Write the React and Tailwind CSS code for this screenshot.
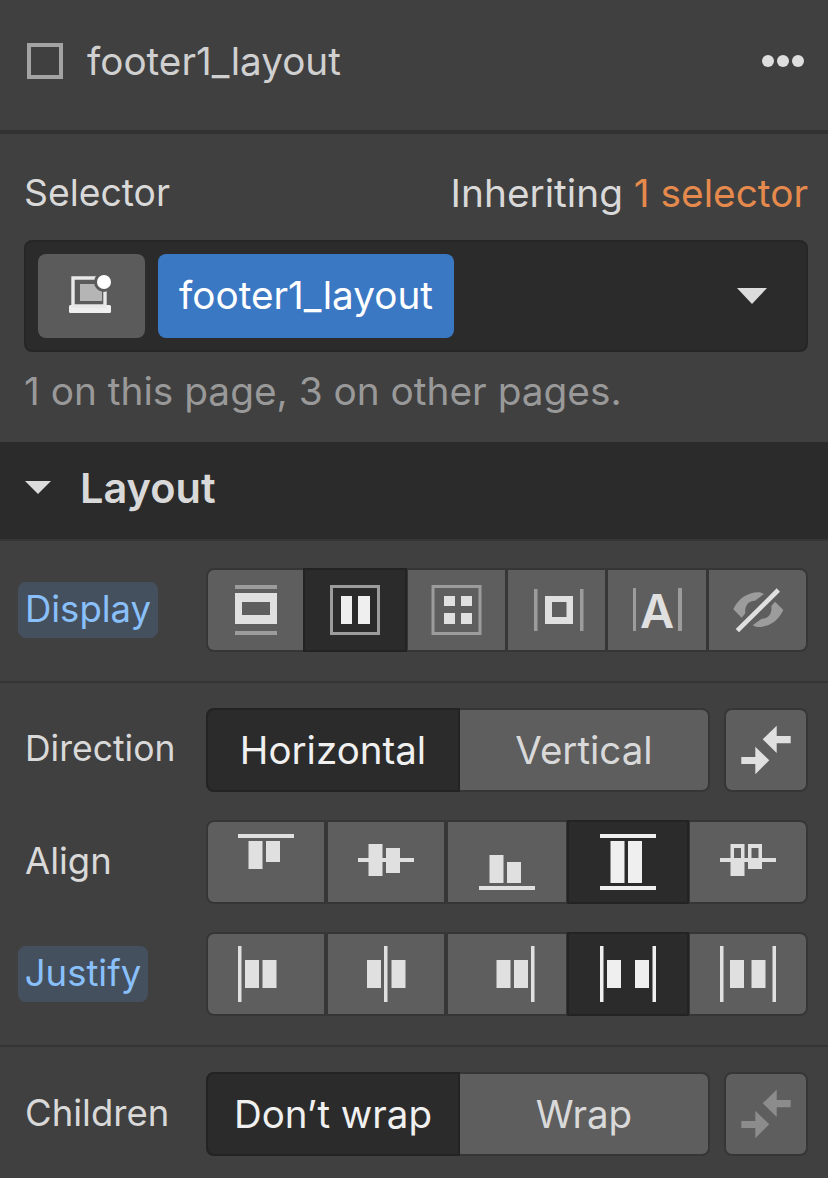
const L = "#e0e0e0";
const G = "#9c9c9c";
const W = "#efefef";

function Ic({ size = 56, children, className = "" }) {
  return (
    <svg width={size} height={size} viewBox={`0 0 ${size} ${size}`} className={className} shapeRendering="geometricPrecision">
      {children}
    </svg>
  );
}
const R = ({ x, y, w, h, f = L }) => <rect x={x} y={y} width={w} height={h} fill={f} />;

const displayIcons = [
  <Ic><R x={7} y={3} w={42} h={4} f={G} /><path fillRule="evenodd" d="M7 11h42v31H7zM14 20v13h28V20z" fill={L} /><R x={7} y={49} w={42} h={4} f={G} /></Ic>,
  <Ic><rect x={4.5} y={4.5} width={47} height={47} fill="none" stroke={G} strokeWidth="3" /><R x={14} y={14} w={11} h={28} f={W} /><R x={31} y={14} w={12} h={28} f={W} /></Ic>,
  <Ic><rect x={4} y={4.5} width={47} height={47} fill="none" stroke={G} strokeWidth="3" /><R x={15} y={14} w={11} h={10} /><R x={32} y={14} w={11} h={10} /><R x={15} y={31} w={11} h={11} /><R x={32} y={31} w={11} h={11} /></Ic>,
  <Ic><R x={5} y={7} w={3.5} h={42} f={G} /><R x={51} y={7} w={3.5} h={42} f={G} /><path fillRule="evenodd" d="M16 14h28v28H16zM23 20v15h14.5V20z" fill={L} /></Ic>,
  <div className="relative flex h-14 w-14 items-center justify-center">
    <div className="absolute left-[3.5px] top-[6px] h-[43px] w-[3.5px] bg-[#9c9c9c]" />
    <div className="absolute left-[49px] top-[6px] h-[43px] w-[3.5px] bg-[#9c9c9c]" />
    <span className="font-['Inter',sans-serif] text-[47px] font-semibold leading-none text-[#e0e0e0]">A</span>
  </div>,
  <svg width="56" height="56" viewBox="330 36 168 168">
    <path d="M340 118 C355 85 385 65 420 67 L432 72 L405 92 C385 92 373 108 376 130 L365 143 Z" fill={G} />
    <path d="M490 120 C475 153 445 173 410 171 L398 166 L425 146 C445 146 457 130 454 108 L465 95 Z" fill={G} />
    <path d="M475 60 L352 182" stroke={L} strokeWidth="14" />
  </svg>,
];

const alignIcons = [
  <Ic><R x={0} y={0} w={56} h={4} /><R x={10.5} y={7} w={14} h={28} /><R x={28} y={7} w={14} h={21} /></Ic>,
  <Ic><R x={0} y={24} w={56} h={4} /><R x={10.5} y={10} w={14} h={32} /><R x={28} y={14} w={14} h={25} /></Ic>,
  <Ic><R x={0} y={52} w={56} h={4} /><R x={10.5} y={21} w={14} h={28} /><R x={28} y={28} w={14} h={21} /></Ic>,
  <Ic><R x={0} y={0} w={56} h={4} f={W} /><R x={0} y={52} w={56} h={4} f={W} /><R x={10.5} y={7} w={14} h={42} f={W} /><R x={28} y={7} w={14} h={42} f={W} /></Ic>,
  <Ic>
    <R x={0} y={24} w={56} h={4} />
    <path fillRule="evenodd" d="M10.5 10h14v32h-14zM14 14v10h7V14z" fill={L} />
    <path fillRule="evenodd" d="M28 10h14v25H28zM31.5 14v10h7V14z" fill={L} />
  </Ic>,
];

const justifyIcons = [
  <Ic><R x={0} y={0} w={3.5} h={56} /><R x={7} y={14} w={14} h={28} /><R x={24.5} y={14} w={14} h={28} /></Ic>,
  <Ic><R x={26} y={0} w={3.5} h={56} /><R x={9} y={14} w={14} h={28} /><R x={33.5} y={14} w={14} h={28} /></Ic>,
  <Ic><R x={52} y={0} w={3.5} h={56} /><R x={17.5} y={14} w={14} h={28} /><R x={35} y={14} w={14} h={28} /></Ic>,
  <Ic><R x={0} y={0} w={3.5} h={56} f={W} /><R x={52.5} y={0} w={3.5} h={56} f={W} /><R x={7} y={14} w={14} h={28} f={W} /><R x={35} y={14} w={14} h={28} f={W} /></Ic>,
  <Ic><R x={0} y={0} w={3.5} h={56} /><R x={52.5} y={0} w={3.5} h={56} /><R x={10} y={14} w={14} h={28} /><R x={31.5} y={14} w={14} h={28} /></Ic>,
];

function Arrows({ dim }) {
  const f = dim ? "#8c8c8c" : L;
  return (
    <svg width="50" height="50" viewBox="0 0 50 50">
      <path d="M21.7 14.3 L35.7 0.7 V11 H49.7 V18.3 H35.7 V28 Z" fill={f} />
      <path d="M28.3 35.3 L14.3 21.7 V32 H0.3 V39 H14.3 V49.3 Z" fill={f} />
    </svg>
  );
}

function Seg({ items, active, widths, gap, activeMargin }) {
  return (
    <div className={"flex h-[84px] w-[602px] rounded-[8px] border-2 border-[#363636] bg-[#363636] " + gap}>
      {items.map((ic, i) => (
        <div
          key={i}
          style={{ width: widths[i] }}
          className={
            "flex shrink-0 items-center justify-center " +
            (i === active
              ? "-my-[2px] bg-[#2b2b2b] outline-2 -outline-offset-2 outline-[#232323] " + activeMargin + " "
              : "bg-[#5e5e5e] ") +
            (i === 0 ? "rounded-l-[6px] " : "") +
            (i === items.length - 1 ? "rounded-r-[6px] " : "")
          }
        >
          {ic}
        </div>
      ))}
    </div>
  );
}

function Toggle({ a, b }) {
  return (
    <div className="flex h-[84px] w-[504px] rounded-[8px] border-2 border-[#363636] bg-[#363636] text-[38.5px]">
      <div className="-my-[2px] -ml-[2px] flex w-[254px] items-center justify-center rounded-l-[8px] border-2 border-[#232323] bg-[#2b2b2b] text-[#f0f0f0]">
        {a}
      </div>
      <div className="flex flex-1 items-center justify-center rounded-r-[6px] bg-[#5e5e5e] text-[#d9d9d9]">{b}</div>
    </div>
  );
}

function SquareBtn({ dim }) {
  return (
    <div className="flex h-[84px] w-[84px] items-center justify-center rounded-[8px] border-2 border-[#363636] bg-[#5e5e5e]">
      <Arrows dim={dim} />
    </div>
  );
}

const alignW = [116, 116, 118, 122, 116];

export default function App() {
  return (
    <div className="flex h-[1178px] w-[828px] flex-col overflow-hidden bg-[#404040] font-['Inter',sans-serif] text-[36.5px] leading-[42px] text-[#d9d9d9]">
      {/* header */}
      <div className="flex h-[130px] shrink-0 items-start pl-[27px] pr-[24px] pt-[40px]">
        <div className="mt-[3px] h-[36px] w-[36px] border-[4px] border-[#a3a3a3]" />
        <div className="ml-[24px] text-[38.7px] text-[#d0d0d0]">footer1_layout</div>
        <div className="ml-auto mt-[15px] flex gap-[3px]">
          <div className="h-[12px] w-[12px] rounded-full bg-[#dedede]" />
          <div className="h-[12px] w-[12px] rounded-full bg-[#dedede]" />
          <div className="h-[12px] w-[12px] rounded-full bg-[#dedede]" />
        </div>
      </div>
      <div className="h-[4px] shrink-0 bg-[#323232]" />

      {/* selector */}
      <div className="flex h-[308px] shrink-0 flex-col pl-[24px] pr-[20px] pt-[38px]">
        <div className="flex h-[42px] items-center justify-between">
          <span className="text-[37.3px]">Selector</span>
          <span className="text-[38.8px]">
            Inheriting <span className="text-[#e58a4c]">1 selector</span>
          </span>
        </div>
        <div className="mt-[26px] flex h-[112px] items-center rounded-[8px] border-2 border-[#262626] bg-[#2b2b2b] pl-[12px]">
          <div className="flex h-[84px] w-[107px] items-center justify-center rounded-[8px] bg-[#5b5b5b]">
            <svg width="48" height="44" viewBox="0 0 48 44" className="ml-[2px] mt-[1px]">
              <rect x="0" y="30" width="42" height="8" rx="1.5" fill="#efefef" />
              <path d="M4 31 V3 H36 V31 Z" fill="none" stroke="#e8e8e8" strokeWidth="3.4" />
              <path d="M11 9 H33 V26 H11 Z" fill="#b5b5b5" />
              <circle cx="35" cy="7" r="10" fill="#5b5b5b" />
              <circle cx="35" cy="7" r="7" fill="#ffffff" />
            </svg>
          </div>
          <div className="ml-[13px] flex h-[84px] w-[296px] items-center justify-center rounded-[8px] bg-[#3b78c4] pb-[3px] text-[38.7px] text-white">
            footer1_layout
          </div>
          <div className="ml-auto mr-[39px] h-0 w-0 border-x-[15px] border-t-[16px] border-x-transparent border-t-[#dcdcdc]" />
        </div>
        <div className="mt-[18px] whitespace-nowrap text-[38.8px] text-[#999999]">1 on this page, 3 on other pages.</div>
      </div>

      {/* layout header */}
      <div className="flex h-[97px] shrink-0 items-center bg-[#2b2b2b] pb-[6px] pl-[25px]">
        <div className="h-0 w-0 border-x-[13.5px] border-t-[13px] border-x-transparent border-t-[#dcdcdc]" />
        <span className="ml-[29px] text-[41.5px] font-semibold text-[#d9d9d9]">Layout</span>
      </div>
      <div className="h-[2px] shrink-0 bg-[#363636]" />

      {/* display */}
      <div className="flex h-[140px] shrink-0 items-start pl-[18px] pt-[27px]">
        <div className="mt-[14px] flex h-[56px] w-[140px] items-center justify-center rounded-[8px] bg-[#45505e] pb-[2px] text-[#89c0fb]">Display</div>
        <div className="ml-[48px]">
          <Seg items={displayIcons} active={1} widths={[95, 104, 97, 97, 98, 97]} gap="gap-[3px]" activeMargin="-ml-[3px] -mr-[2px]" />
        </div>
      </div>
      <div className="h-[2px] shrink-0 bg-[#343434]" />

      {/* flex settings */}
      <div className="flex h-[362px] shrink-0 flex-col">
        <div className="mt-[25px] flex h-[84px] items-center pl-[25px]">
          <span className="w-[181px] pb-[2px] text-[35.5px]">Direction</span>
          <Toggle a="Horizontal" b="Vertical" />
          <div className="ml-[14px]">
            <SquareBtn />
          </div>
        </div>
        <div className="mt-[28px] flex h-[84px] items-center pl-[25px]">
          <span className="w-[181px] pb-[2px]">Align</span>
          <Seg items={alignIcons} active={3} widths={alignW} gap="gap-[4px]" activeMargin="-mx-[3px]" />
        </div>
        <div className="mt-[28px] flex h-[84px] items-center pl-[18px]">
          <div className="flex h-[56px] w-[130px] items-center justify-center rounded-[8px] bg-[#45505e] pb-[2px] text-[#89c0fb]">Justify</div>
          <div className="ml-[58px]">
            <Seg items={justifyIcons} active={3} widths={alignW} gap="gap-[4px]" activeMargin="-mx-[3px]" />
          </div>
        </div>
      </div>
      <div className="h-[2px] shrink-0 bg-[#343434]" />

      {/* children */}
      <div className="mt-[25px] flex h-[84px] shrink-0 items-center pl-[25px]">
        <span className="w-[181px] pb-[2px]">Children</span>
        <Toggle a="Don’t wrap" b="Wrap" />
        <div className="ml-[14px]">
          <SquareBtn dim />
        </div>
      </div>
    </div>
  );
}
